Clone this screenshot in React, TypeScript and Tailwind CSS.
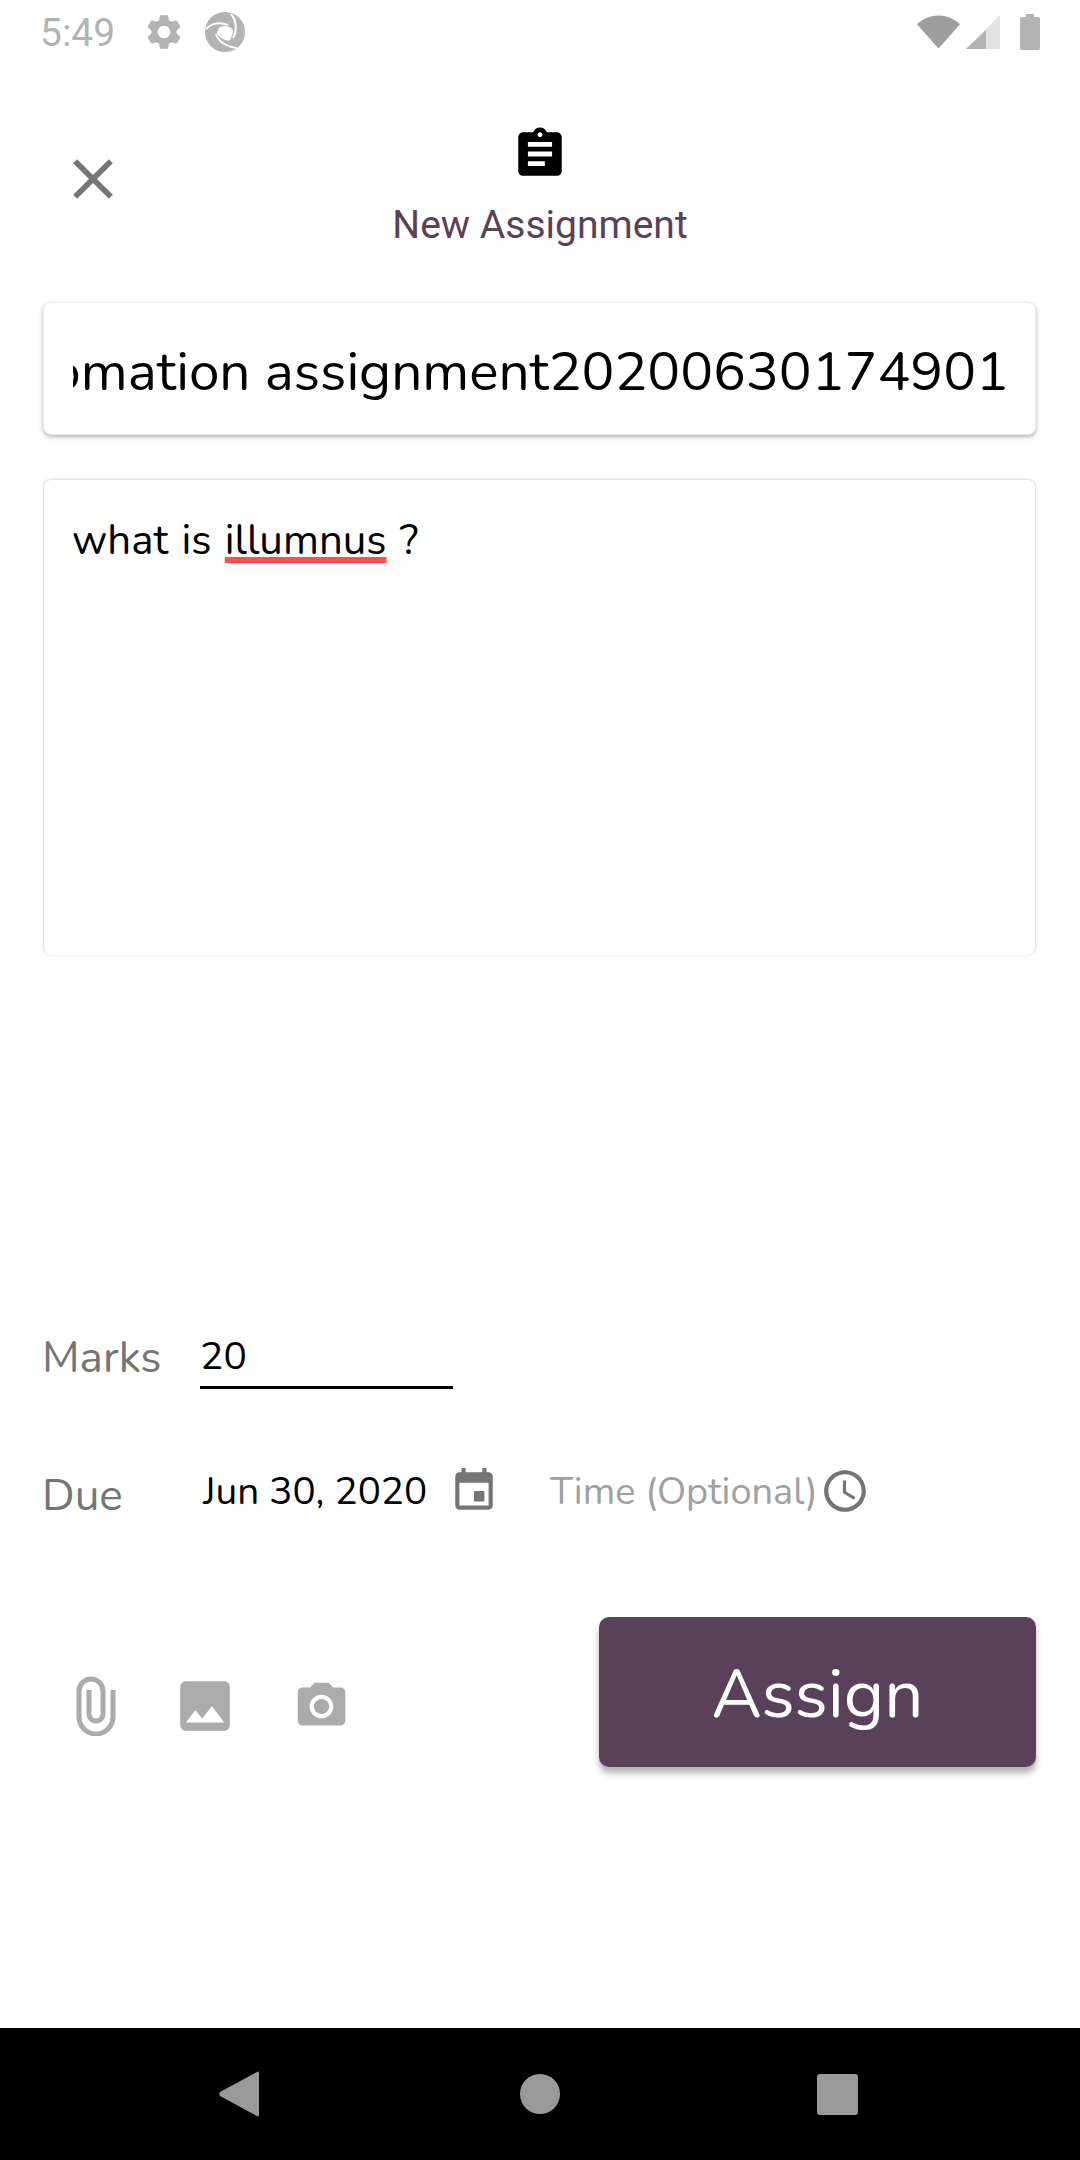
import { MdClose, MdAssignment, MdImage, MdPhotoCamera, MdEvent, MdAccessTime, MdSettings } from 'react-icons/md';

const NUNITO = 'font-["Nunito","Lato","Noto_Sans",sans-serif]';

function StatusBar() {
  return (
    <div className="h-[63px] flex items-center justify-between pl-[40px] pr-[40px] text-[#b3b3b3]">
      <div className="flex items-center">
        <span className="font-['Roboto',sans-serif] text-[39px] leading-none w-[103px] pt-[3px]">5:49</span>
        <MdSettings className="w-[42px] h-[42px] mr-[19px]" />
        <svg viewBox="0 0 42 42" className="w-[42px] h-[42px]">
          <circle cx="21" cy="21" r="20" fill="#b3b3b3" />
          <path d="M16 16C20 14 26 15 29 19C29 24 27 27 25 30C20 29 15 26 13 23C13 20 14 18 16 16z" fill="#fff" />
          <path d="M2 18C8 12 16 11 24 14M27 3C33 10 33 20 29 27M12 23C14 30 22 36 33 37" fill="none" stroke="#fff" strokeWidth="2" />
        </svg>
      </div>
      <div className="flex items-center">
        <svg viewBox="0 0 44 34" className="w-[43px] h-[34px]">
          <path d="M0 9C6 3 14 0 22 0s16 3 22 9L22 34z" fill="#9e9e9e" />
        </svg>
        <svg viewBox="0 0 34 34" className="ml-[6px] w-[34px] h-[34px]">
          <path d="M34 0v34H0z" fill="#e2e2e2" />
          <path d="M20 15v19H0z" fill="#b3b3b3" />
        </svg>
        <svg viewBox="0 0 20 36" className="ml-[20px] w-[20px] h-[36px]">
          <path d="M6 0h8v3h4a2 2 0 0 1 2 2v29a2 2 0 0 1-2 2H2a2 2 0 0 1-2-2V5a2 2 0 0 1 2-2h4z" fill="#b3b3b3" />
        </svg>
      </div>
    </div>
  );
}

function NavBar() {
  return (
    <div className="h-[132px] bg-black grid grid-cols-3 items-center px-[88px]">
      <div className="flex justify-center">
        <svg viewBox="0 0 40 46" className="w-[40px] h-[46px]">
          <path d="M38 1 1 21c-1 1-1 3 0 4l37 20c1 1 2 0 2-1V2c0-1-1-2-2-1z" fill="#999" />
        </svg>
      </div>
      <div className="flex justify-center">
        <div className="w-[40px] h-[40px] rounded-full bg-[#999]" />
      </div>
      <div className="flex justify-center pr-[8px]">
        <div className="w-[41px] h-[41px] rounded-[3px] bg-[#999]" />
      </div>
    </div>
  );
}

export default function App() {
  return (
    <div className="w-[1080px] h-[2160px] bg-white flex flex-col overflow-hidden">
      <StatusBar />

      {/* Header */}
      <div className="h-[239px] grid grid-cols-[1fr_auto_1fr]">
        <div className="pl-[59px] pt-[82px]">
          <MdClose className="w-[68px] h-[68px] text-[#757575]" />
        </div>
        <div className="flex flex-col items-center pt-[62px]">
          <MdAssignment className="w-[58px] h-[58px] text-black" />
          <span className="mt-[17px] font-['Roboto',sans-serif] text-[39px] leading-[50px] text-[#5a415a]">
            New Assignment
          </span>
        </div>
      </div>

      {/* Form */}
      <div className="flex-1 pl-[43px] pr-[44px]">
        <div className="h-[133px] rounded-[8px] bg-white border border-[#ececec] shadow-[0_2px_4px_rgba(0,0,0,0.3)] pl-[29px] pr-[26px] flex items-center justify-end overflow-hidden">
          <div className="overflow-hidden w-full flex justify-end pt-[7px]">
            <span className={`${NUNITO} text-[54.8px] leading-[74px] text-black whitespace-nowrap`}>
              Automation assignment20200630174901
            </span>
          </div>
        </div>

        <div className="mt-[44px] h-[476px] rounded-[8px] border border-[#e4e4e4] border-b-0 shadow-[0_0_3px_rgba(0,0,0,0.12)] pl-[28px] pr-[29px] pt-[32px]">
          <p className={`${NUNITO} text-[42px] leading-[58px] text-black [word-spacing:2.5px]`}>
            what is{' '}
            <span className="underline decoration-[#ff4d4d] decoration-[6px] underline-offset-[3px] [text-decoration-skip-ink:none]">
              illumnus
            </span>{' '}
            ?
          </p>
        </div>

        <div className="mt-[370px] flex items-center h-[64px]">
          <span className={`${NUNITO} text-[44px] leading-[58px] text-[#757575] w-[157px] -ml-[1px] pt-[2px]`}>Marks</span>
          <div className="ml-[1px] w-[253px] h-[64px] border-b-[3px] border-black flex items-center">
            <span className={`${NUNITO} text-[39px] leading-[58px] text-black pt-[2px]`}>20</span>
          </div>
        </div>

        <div className="mt-[73px] flex items-center h-[60px]">
          <span className={`${NUNITO} text-[44px] leading-[58px] text-[#757575] w-[160px] pt-[7px] -ml-[1px]`}>Due</span>
          <span className={`${NUNITO} text-[38.7px] leading-[52px] text-black w-[246px] ml-[1px]`}>Jun 30, 2020</span>
          <MdEvent className="w-[50px] h-[50px] text-[#757575] mb-[2px]" />
          <span className={`${NUNITO} text-[38px] leading-[52px] text-[#a0a0a0] ml-[51px] whitespace-nowrap`}>
            Time (Optional)
          </span>
          <MdAccessTime className="w-[50px] h-[50px] text-[#757575] ml-[2px] mb-[2px]" />
        </div>

        <div className="mt-[95px] flex items-center justify-between">
          <div className="flex items-center pl-[31px] pt-[28px] text-[#ababab]">
            <svg viewBox="0 0 44 60" className="w-[44px] h-[60px]" fill="none" stroke="currentColor" strokeWidth="5">
              <path d="M39 14V41A17 17 0 0 1 5 41V15A12 12 0 0 1 29 15V38A7 7 0 0 1 15 38V14" />
            </svg>
            <MdImage className="ml-[54px] w-[66px] h-[66px]" />
            <MdPhotoCamera className="ml-[55px] w-[57px] h-[57px]" />
          </div>
          <button className="w-[437px] h-[150px] rounded-[10px] bg-[#5a415a] shadow-[0_6px_6px_rgba(0,0,0,0.3)] flex items-center justify-center">
            <span className={`${NUNITO} text-[69px] leading-none text-white pt-[5px]`}>Assign</span>
          </button>
        </div>
      </div>

      <NavBar />
    </div>
  );
}
